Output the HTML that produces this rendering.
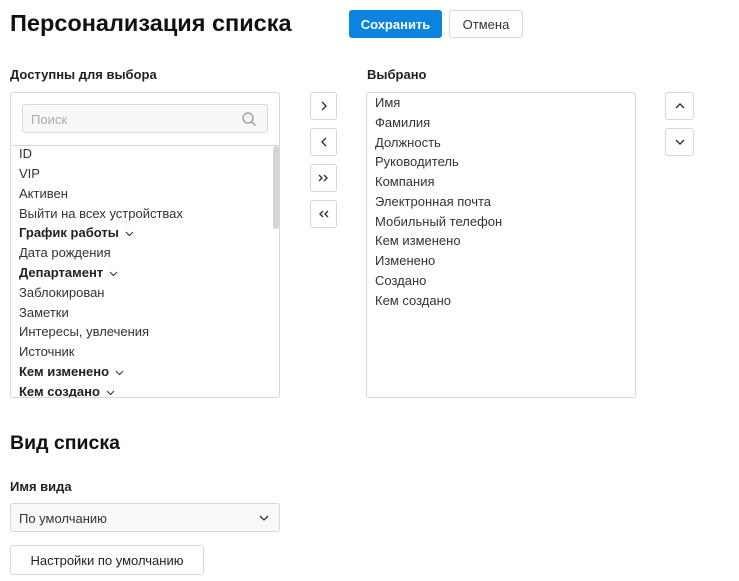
<!DOCTYPE html><html><head><meta charset="utf-8"><style>
*{box-sizing:border-box;margin:0;padding:0}
body{width:739px;height:581px;background:#fff;font-family:"Liberation Sans",sans-serif;color:#222;position:relative;overflow:hidden;font-size:13px}
.a{position:absolute}
.btn{position:absolute;border:1px solid #d5d8dc;border-radius:3px;background:#fff;display:flex;align-items:center;justify-content:center}
.box{position:absolute;border:1px solid #d5d8dc;border-radius:3px}
.it{position:absolute;left:8px;white-space:nowrap;color:#333}
.b{font-weight:bold;color:#222}
svg{display:block}
.cv{display:inline-block;vertical-align:middle;margin-left:6px}
</style></head><body>
<div class="a" style="left:10px;top:10px;font-size:23.5px;font-weight:bold;color:#111">Персонализация списка</div>
<div class="a" style="left:349px;top:10px;width:93px;height:28px;background:#0a84e0;border-radius:3px;color:#fff;font-weight:bold;display:flex;align-items:center;justify-content:center">Сохранить</div>
<div class="btn" style="left:449px;top:10px;width:74px;height:28px;color:#333">Отмена</div>
<div class="a b" style="left:10px;top:67px">Доступны для выбора</div>
<div class="a b" style="left:367px;top:67px">Выбрано</div>
<div class="box" style="left:10px;top:92px;width:270px;height:306px;overflow:hidden">
<div class="a" style="left:11px;top:11px;width:246px;height:29px;border:1px solid #d5d8dc;border-radius:3px;background:#f7f8f9;color:#aaa;padding:7px 8px">Поиск
<svg class="a" style="right:10px;top:6px" width="16" height="16" viewBox="0 0 16 16" fill="none" stroke="#999" stroke-width="1.3"><circle cx="7" cy="7" r="5"/><path d="M11 11l3.5 3.5"/></svg></div>
<div class="a" style="left:0;top:52px;width:270px;border-top:1px solid #d5d8dc"></div>
<div class="a" style="left:262px;top:53px;width:6px;height:83px;background:#d3d5d8;border-radius:3px"></div>
<div class="it" style="top:53px">ID</div>
<div class="it" style="top:73px">VIP</div>
<div class="it" style="top:93px">Активен</div>
<div class="it" style="top:113px">Выйти на всех устройствах</div>
<div class="it b" style="top:132px">График работы<svg class="cv" width="9" height="6" viewBox="0 0 9 6" fill="none" stroke="#444" stroke-width="1.2"><path d="M1 1l3.5 3.5L8 1"/></svg></div>
<div class="it" style="top:152px">Дата рождения</div>
<div class="it b" style="top:172px">Департамент<svg class="cv" width="9" height="6" viewBox="0 0 9 6" fill="none" stroke="#444" stroke-width="1.2"><path d="M1 1l3.5 3.5L8 1"/></svg></div>
<div class="it" style="top:192px">Заблокирован</div>
<div class="it" style="top:212px">Заметки</div>
<div class="it" style="top:231px">Интересы, увлечения</div>
<div class="it" style="top:251px">Источник</div>
<div class="it b" style="top:271px">Кем изменено<svg class="cv" width="9" height="6" viewBox="0 0 9 6" fill="none" stroke="#444" stroke-width="1.2"><path d="M1 1l3.5 3.5L8 1"/></svg></div>
<div class="it b" style="top:291px">Кем создано<svg class="cv" width="9" height="6" viewBox="0 0 9 6" fill="none" stroke="#444" stroke-width="1.2"><path d="M1 1l3.5 3.5L8 1"/></svg></div>
</div>
<div class="btn" style="left:310px;top:92px;width:27px;height:28px"><svg width="10" height="10" viewBox="0 0 10 10" fill="none" stroke="#333" stroke-width="1.4"><path d="M3 1l4 4-4 4"/></svg></div>
<div class="btn" style="left:310px;top:128px;width:27px;height:28px"><svg width="10" height="10" viewBox="0 0 10 10" fill="none" stroke="#333" stroke-width="1.4"><path d="M7 1L3 5l4 4"/></svg></div>
<div class="btn" style="left:310px;top:164px;width:27px;height:28px"><svg width="12" height="10" viewBox="0 0 12 10" fill="none" stroke="#333" stroke-width="1.4"><path d="M1 2l3 3-3 3M6 2l3 3-3 3"/></svg></div>
<div class="btn" style="left:310px;top:200px;width:27px;height:28px"><svg width="12" height="10" viewBox="0 0 12 10" fill="none" stroke="#333" stroke-width="1.4"><path d="M5 2L2 5l3 3M10 2L7 5l3 3"/></svg></div>
<div class="box" style="left:366px;top:92px;width:270px;height:306px">
<div class="it" style="top:2px">Имя</div>
<div class="it" style="top:22px">Фамилия</div>
<div class="it" style="top:42px">Должность</div>
<div class="it" style="top:61px">Руководитель</div>
<div class="it" style="top:81px">Компания</div>
<div class="it" style="top:101px">Электронная почта</div>
<div class="it" style="top:121px">Мобильный телефон</div>
<div class="it" style="top:140px">Кем изменено</div>
<div class="it" style="top:160px">Изменено</div>
<div class="it" style="top:180px">Создано</div>
<div class="it" style="top:200px">Кем создано</div>
</div>
<div class="btn" style="left:665px;top:92px;width:29px;height:28px"><svg width="10" height="10" viewBox="0 0 10 10" fill="none" stroke="#333" stroke-width="1.4"><path d="M1 7l4-4 4 4"/></svg></div>
<div class="btn" style="left:665px;top:128px;width:29px;height:28px"><svg width="10" height="10" viewBox="0 0 10 10" fill="none" stroke="#333" stroke-width="1.4"><path d="M1 3l4 4 4-4"/></svg></div>
<div class="a" style="left:10px;top:432px;font-size:19.5px;font-weight:bold;color:#111">Вид списка</div>
<div class="a b" style="left:10px;top:479px">Имя вида</div>
<div class="box" style="left:10px;top:503px;width:270px;height:29px;background:#f9f9fa;padding:7px 8px;color:#333">По умолчанию
<svg class="a" style="right:10px;top:10px" width="10" height="8" viewBox="0 0 10 8" fill="none" stroke="#333" stroke-width="1.3"><path d="M1 2l4 4 4-4"/></svg></div>
<div class="btn" style="left:10px;top:545px;width:194px;height:30px;color:#222">Настройки по умолчанию</div>
</body></html>
